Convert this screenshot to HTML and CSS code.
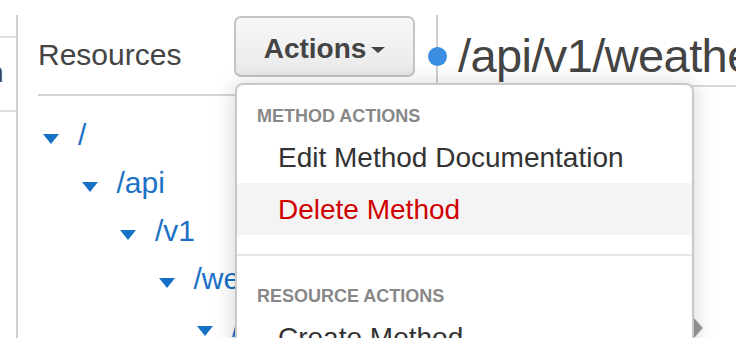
FILE: index.html
```html
<!DOCTYPE html>
<html lang="en">

<head>
  <meta charset="UTF-8">
  <meta name="viewport" content="width=device-width, initial-scale=1.0">
  <title>API Gateway - Resources</title>
  <link rel="stylesheet" href="styles.css">
</head>

<body>
  <div class="page">
    <div class="side">
      <div class="side-tab"><span>n</span></div>
    </div>

    <div class="resources">
      <div class="res-head">
        <h2>Resources</h2>
        <button class="actions">Actions<i class="caret"></i></button>
      </div>
      <ul class="tree">
        <li>
          <div class="node"><i class="toggle"></i><a>/</a></div>
          <ul>
            <li>
              <div class="node"><i class="toggle"></i><a>/api</a></div>
              <ul>
                <li>
                  <div class="node"><i class="toggle"></i><a>/v1</a></div>
                  <ul>
                    <li>
                      <div class="node"><i class="toggle"></i><a>/weather</a></div>
                      <ul>
                        <li>
                          <div class="node"><i class="toggle"></i><a>/{city}</a></div>
                        </li>
                      </ul>
                    </li>
                  </ul>
                </li>
              </ul>
            </li>
          </ul>
        </li>
      </ul>
    </div>

    <div class="detail">
      <span class="status"></span>
      <div class="detail-head">/api/v1/weather/{city}</div>
    </div>

    <!-- Actions 下拉菜单 -->
    <div class="menu">
      <div class="menu-group">
        <h3>Method Actions</h3>
        <a class="item">Edit Method Documentation</a>
        <a class="item danger active">Delete Method</a>
      </div>
      <div class="menu-group">
        <h3>Resource Actions</h3>
        <a class="item">Create Method</a>
        <a class="item">Create Resource</a>
      </div>
    </div>
    <i class="handle"></i>
  </div>
</body>

</html>
```

FILE: styles.css
```css
body {
  margin: 0;
  width: 736px;
  height: 338px;
  overflow: hidden;
  background: #fff;
  font-family: "Liberation Sans", Arial, Helvetica, sans-serif;
  color: #444;
}

.page {
  position: relative;
  display: flex;
  padding-top: 15px;
  height: 323px;
}

/* 左侧窄栏 */
.side {
  width: 16px;
  flex-shrink: 0;
  border-right: 2px solid #cfcfcf;
}

.side-tab {
  margin-top: 21px;
  height: 76px;
  padding-top: 21px;
  box-sizing: border-box;
  border-top: 2px solid #e0e0e0;
  border-bottom: 2px solid #e0e0e0;
  overflow: hidden;
  font-size: 28px;
  line-height: 28px;
  white-space: nowrap;
}

.side-tab span {
  display: block;
  margin-left: -12px;
}

/* 资源面板 */
.resources {
  width: 398px;
  flex-shrink: 0;
  padding-left: 20px;
  border-right: 2px solid #cfcfcf;
}

.res-head {
  display: flex;
  justify-content: space-between;
  align-items: flex-start;
  height: 79px;
  padding-right: 21px;
  border-bottom: 2px solid #d4d4d4;
}

.res-head h2 {
  margin: 25px 0 0;
  font-size: 30px;
  line-height: 30px;
  font-weight: 400;
  color: #444;
}

.actions {
  display: flex;
  align-items: center;
  justify-content: center;
  margin-top: 1px;
  width: 181px;
  height: 61px;
  padding: 4px 0 0;
  box-sizing: border-box;
  border: 2px solid #c4c4c4;
  border-radius: 7px;
  background: linear-gradient(#f8f8f8, #e9e9e9);
  font-family: inherit;
  font-size: 28px;
  line-height: 28px;
  font-weight: 700;
  color: #444;
}

.caret {
  margin: 2px 0 0 5px;
  border-left: 7.5px solid transparent;
  border-right: 7.5px solid transparent;
  border-top: 6px solid #444;
}

.tree,
.tree ul {
  list-style: none;
  margin: 0;
  padding: 0 0 0 38.5px;
}

.tree {
  margin-top: 15px;
  padding-left: 5px;
}

.node {
  display: flex;
  align-items: center;
  height: 48px;
  font-size: 30px;
  line-height: 48px;
  white-space: nowrap;
}

.node a {
  color: #1a71c6;
}

.toggle {
  margin: 7px 19px 0 0;
  border-left: 8.5px solid transparent;
  border-right: 8.5px solid transparent;
  border-top: 10px solid #1670c5;
}

/* 右侧详情 */
.detail {
  position: relative;
  flex: 1;
  min-width: 0;
}

.detail-head {
  height: 72px;
  padding: 17px 0 0 20px;
  box-sizing: border-box;
  border-bottom: 2px solid #dadada;
  font-size: 47px;
  line-height: 47px;
  letter-spacing: -0.6px;
  white-space: nowrap;
  overflow: hidden;
  color: #444;
}

.status {
  position: absolute;
  left: -10px;
  top: 32px;
  width: 19px;
  height: 19px;
  border-radius: 50%;
  background: #3a8fe2;
}

/* 下拉菜单 */
.menu {
  position: absolute;
  z-index: 2;
  left: 235px;
  top: 83px;
  width: 459px;
  height: 300px;
  box-sizing: border-box;
  border: 2px solid #c8c8c8;
  border-radius: 8px 8px 0 0;
  background: #fff;
  box-shadow: 0 2px 22px rgba(0, 0, 0, 0.18);
}

.menu-group {
  padding: 22px 0 19px;
  border-bottom: 2px solid #e6e6e6;
}

.menu-group + .menu-group {
  padding-top: 31px;
  border-bottom: 0;
}

.menu-group h3 {
  margin: 0 0 6px;
  padding-left: 20px;
  font-size: 18px;
  line-height: 18px;
  font-weight: 700;
  text-transform: uppercase;
  color: #888;
}

.item {
  display: block;
  height: 52px;
  padding: 2px 0 0 41px;
  box-sizing: border-box;
  font-size: 28px;
  line-height: 50px;
  color: #333;
}

.item.active {
  background: #f4f4f4;
}

.item.danger {
  color: #d10000;
}

.handle {
  position: absolute;
  z-index: 1;
  left: 693px;
  top: 317px;
  border-left: 10px solid #9c9c9c;
  border-top: 11px solid transparent;
  border-bottom: 11px solid transparent;
}
```
